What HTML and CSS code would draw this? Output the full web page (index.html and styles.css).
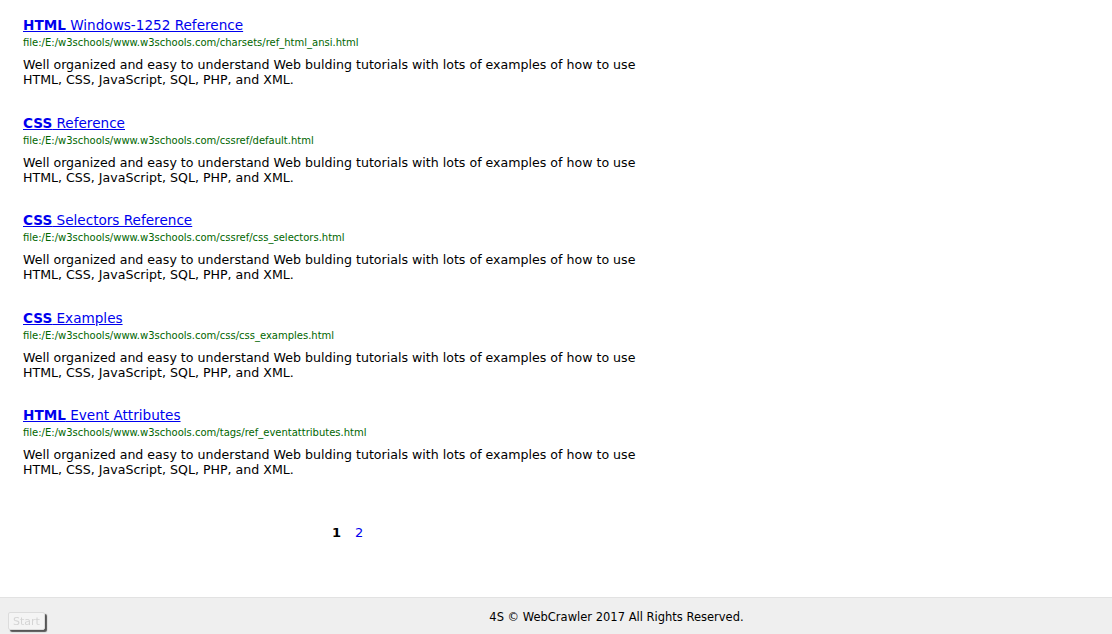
FILE: index.html
```html
<!DOCTYPE html>
<html>
<head>
<meta charset="utf-8">
<link rel="stylesheet" href="styles.css">
</head>
<body>
<div class="page">
  <main class="results">
    <div class="result">
      <a class="title" href="#"><b>HTML</b> Windows-1252 Reference</a>
      <div class="url">file:/E:/w3schools/www.w3schools.com/charsets/ref_html_ansi.html</div>
      <p class="desc">Well organized and easy to understand Web bulding tutorials with lots of examples of how to use<br>HTML, CSS, JavaScript, SQL, PHP, and XML.</p>
    </div>
    <div class="result">
      <a class="title" href="#"><b>CSS</b> Reference</a>
      <div class="url">file:/E:/w3schools/www.w3schools.com/cssref/default.html</div>
      <p class="desc">Well organized and easy to understand Web bulding tutorials with lots of examples of how to use<br>HTML, CSS, JavaScript, SQL, PHP, and XML.</p>
    </div>
    <div class="result">
      <a class="title" href="#"><b>CSS</b> Selectors Reference</a>
      <div class="url">file:/E:/w3schools/www.w3schools.com/cssref/css_selectors.html</div>
      <p class="desc">Well organized and easy to understand Web bulding tutorials with lots of examples of how to use<br>HTML, CSS, JavaScript, SQL, PHP, and XML.</p>
    </div>
    <div class="result">
      <a class="title" href="#"><b>CSS</b> Examples</a>
      <div class="url">file:/E:/w3schools/www.w3schools.com/css/css_examples.html</div>
      <p class="desc">Well organized and easy to understand Web bulding tutorials with lots of examples of how to use<br>HTML, CSS, JavaScript, SQL, PHP, and XML.</p>
    </div>
    <div class="result">
      <a class="title" href="#"><b>HTML</b> Event Attributes</a>
      <div class="url">file:/E:/w3schools/www.w3schools.com/tags/ref_eventattributes.html</div>
      <p class="desc">Well organized and easy to understand Web bulding tutorials with lots of examples of how to use<br>HTML, CSS, JavaScript, SQL, PHP, and XML.</p>
    </div>
  </main>
  <nav class="pager">
    <span class="current">1</span>
    <a href="#">2</a>
  </nav>
  <footer class="footer">4S © WebCrawler 2017 All Rights Reserved.</footer>
</div>
<button class="start">Start</button>
</body>
</html>
```
FILE: styles.css
```css
html, body {
  margin: 0;
  padding: 0;
  background: #fff;
  font-family: "DejaVu Sans", Verdana, sans-serif;
  color: #000;
}
.page {
  height: 634px;
  display: flex;
  flex-direction: column;
}
.results {
  padding: 15px 0 0 23px;
  display: flex;
  flex-direction: column;
}
.result {
  height: 97.5px;
}
.title {
  font-size: 13.6px;
  color: #0000ee;
  text-decoration: underline;
  line-height: 17px;
  display: inline-block;
}
.title b {
  font-weight: bold;
}
.url {
  font-size: 10px;
  color: #006600;
  line-height: 13px;
  margin-top: 2px;
}
.desc {
  margin: 8px 0 0;
  font-size: 12.6px;
  line-height: 15px;
}
.pager {
  margin-top: 21px;
  display: flex;
  gap: 14px;
  padding-left: 332px;
  font-size: 13px;
  line-height: 17px;
}
.pager .current {
  font-weight: bold;
}
.pager a {
  color: #0000ee;
  text-decoration: none;
}
.footer {
  margin-top: auto;
  height: 36px;
  background: #efefef;
  border-top: 1px solid #e2e2e2;
  font-size: 11.5px;
  line-height: 38px;
  text-align: center;
  padding-left: 121px;
}
.start {
  position: fixed;
  left: 8px;
  bottom: 4px;
  width: 37px;
  height: 18px;
  padding: 0;
  font-family: "DejaVu Sans", sans-serif;
  font-size: 11px;
  color: #d4d4d4;
  background: #f4f4f4;
  border: 1px solid #dcdcdc;
  border-radius: 2px;
  box-shadow: 2px 2px 1px #555;
}
```
